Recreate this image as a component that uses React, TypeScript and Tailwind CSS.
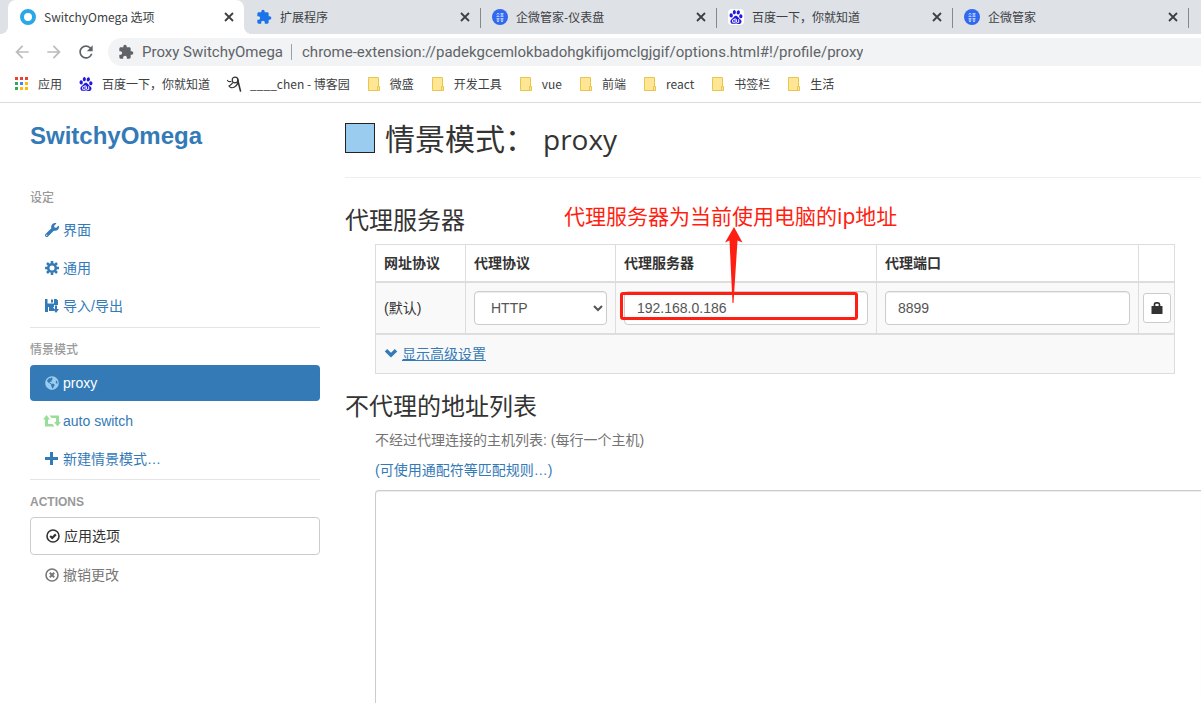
import React from "react";
import { twMerge } from "tailwind-merge";
import { MdArrowBack, MdArrowForward, MdExtension, MdRefresh } from "react-icons/md";
import { SiBaidu } from "react-icons/si";
import { FaGlobeAmericas, FaWrench } from "react-icons/fa";

interface TabProps {
    title: string;
    icon: React.ReactNode;
    active?: boolean;
}

interface BookmarkProps {
    label: string;
    icon?: React.ReactNode;
}

interface SideLinkProps {
    label: string;
    icon: React.ReactNode;
    className?: string;
}

const RingIcon = () => (
    <svg viewBox="0 0 16 16" className="h-4 w-4">
        <circle cx="8" cy="8" r="6" fill="#fff" stroke="#2aa7e8" strokeWidth="4" />
    </svg>
);

const ManagerIcon = () => (
    <svg viewBox="0 0 16 16" className="h-4 w-4">
        <circle cx="8" cy="8" r="8" fill="#3069f0" />
        <g stroke="#c9d9ff" strokeWidth="0.8" fill="none">
            <path d="M4.5 5.5L6 4l1.5 1.5M4.5 7.5h3M6 5.5v2M8.5 4.5h3M8.5 6h3M8.5 7.5h3M10 4v3.5" />
            <path d="M4.5 9.5h3M4.5 11h3M5 12.5h2M6 9v3.5M8.5 9.5h3M8.5 11h3M9 12.5h2M10 9v3.5" />
        </g>
    </svg>
);

const AppsIcon = () => {
    const colors = ["#ea4335", "#ea4335", "#ea4335", "#34a853", "#4285f4", "#fbbc05", "#34a853", "#fbbc05", "#fbbc05"];
    return (
        <svg viewBox="0 0 16 16" className="h-4 w-4">
            {colors.map((color, i) => (
                <rect key={i} x={1 + (i % 3) * 5} y={1 + Math.floor(i / 3) * 5} width="3" height="3" fill={color} />
            ))}
        </svg>
    );
};

const FolderIcon = () => (
    <svg viewBox="0 0 16 16" className="h-4 w-4">
        <path d="M2.5 1.5h10v9h1v4h-11z" fill="#ffe694" stroke="#e8c64e" />
        <path d="M11.5 14v-3.5h1.5" fill="none" stroke="#e8c64e" />
    </svg>
);

const BlogIcon = () => (
    <svg viewBox="0 0 16 16" className="h-4 w-4" fill="none" stroke="#333" strokeLinecap="round">
        <path d="M1.5 4.5c.8 1.3 2 1.3 3.5 1" strokeWidth="1.2" />
        <circle cx="9" cy="4" r="2.8" strokeWidth="1.2" />
        <path d="M12 3c.6 3.5-1 6.5-3.5 8-2 1.2-4.5 1-5.5-1 1.5-.5 2.5-2 3.5-3" strokeWidth="1.2" />
        <path d="M11.8 4.5c1 3.5 1.5 6 2.7 10.5" strokeWidth="1.6" />
    </svg>
);

const CloseIcon = () => (
    <svg viewBox="0 0 14 14" className="h-3.5 w-3.5" stroke="currentColor" strokeWidth="1.8">
        <path d="M3 3l8 8M11 3L3 11" />
    </svg>
);

const CogIcon = () => (
    <svg viewBox="0 0 14 14" className="h-3.5 w-3.5" fill="none" stroke="currentColor">
        <circle cx="7" cy="7" r="3.8" strokeWidth="2.6" />
        <path
            d="M7 0v2.5M7 11.5V14M0 7h2.5M11.5 7H14M2 2l1.8 1.8M10.2 10.2L12 12M12 2l-1.8 1.8M3.8 10.2L2 12"
            strokeWidth="2.6"
        />
    </svg>
);

const SaveIcon = () => (
    <svg viewBox="0 0 14 14" className="h-3.5 w-3.5" fill="currentColor">
        <path d="M0 0h2.5v4.5H9V0h2.5L13 1.5V6H9v2H8l2 3H9v1H4V8H3v5H0z" />
        <path d="M6 .5h2v3H6zM10 6.5h2V10h2l-3 4-3-4h2z" />
    </svg>
);

const RetweetIcon = () => (
    <svg viewBox="0 0 18 12" className="h-3 w-[18px] shrink-0 text-[#99dd99]" fill="currentColor">
        <path d="M0 4.5L3.5 0L7 4.5H5V9h4.5l2 2.5H2v-7zM18 7l-3.5 4.5L11 7h2V3H8.5l-2-2.5H16V7z" />
    </svg>
);

const PlusIcon = () => (
    <svg viewBox="0 0 14 14" className="h-3.5 w-3.5" fill="currentColor">
        <path d="M5 0h3v5h5v3H8v5H5V8H0V5h5z" />
    </svg>
);

const ChevronIcon = () => (
    <svg viewBox="0 0 14 14" className="h-3.5 w-3.5" fill="currentColor">
        <path d="M3.2 2L7 5.7L10.8 2l2.4 2.4L7 10.5L.8 4.4z" />
    </svg>
);

const OkCircleIcon = () => (
    <svg viewBox="0 0 14 14" className="h-3.5 w-3.5" fill="none" stroke="currentColor">
        <circle cx="7" cy="7" r="6" strokeWidth="1.6" />
        <path d="M4.2 7l2 2L9.8 5.4" strokeWidth="2.2" />
    </svg>
);

const RemoveCircleIcon = () => (
    <svg viewBox="0 0 14 14" className="h-3.5 w-3.5" fill="none" stroke="currentColor">
        <circle cx="7" cy="7" r="6" strokeWidth="1.6" />
        <path d="M4.8 4.8l4.4 4.4M9.2 4.8L4.8 9.2" strokeWidth="2" />
    </svg>
);

const LockIcon = () => (
    <svg viewBox="0 0 12 14" className="h-3.5 w-3">
        <path d="M3.5 6V3.5c0-1 .5-1.7 1.5-1.7h2c1 0 1.5.7 1.5 1.7V6" fill="none" stroke="#333" strokeWidth="1.7" />
        <rect x="0.5" y="5" width="11" height="8" rx="0.5" fill="#333" />
    </svg>
);

const Tab: React.FC<TabProps> = ({ title, icon, active }) => (
    <div
        className={twMerge(
            "relative flex h-[34px] w-[236px] min-w-0 items-center pl-3 pr-2",
            active
                ? "rounded-t-lg bg-white before:absolute before:bottom-0 before:-left-2 before:size-2 before:bg-[radial-gradient(circle_at_0_0,#dee1e6_8px,#fff_8px)] after:absolute after:bottom-0 after:-right-2 after:size-2 after:bg-[radial-gradient(circle_at_100%_0,#dee1e6_8px,#fff_8px)]"
                : "after:absolute after:-right-px after:top-2 after:h-5 after:w-px after:bg-[#85888c]"
        )}
    >
        <span className="mr-2 shrink-0">{icon}</span>
        <span className="flex-1 truncate text-xs">{title}</span>
        <button aria-label="关闭" className="shrink-0 text-[#3c4043]">
            <CloseIcon />
        </button>
    </div>
);

const Bookmark: React.FC<BookmarkProps> = ({ label, icon }) => (
    <a href="#" className="flex shrink-0 items-center gap-2">
        {icon ?? <FolderIcon />}
        <span>{label}</span>
    </a>
);

const SideLink: React.FC<SideLinkProps> = ({ label, icon, className }) => (
    <li>
        <a href="#" className={twMerge("flex h-9 items-center gap-1 rounded px-[15px] text-[#337ab7]", className)}>
            <span className="flex w-3.5 shrink-0 justify-center">{icon}</span>
            <span>{label}</span>
        </a>
    </li>
);

const Browser = () => (
    <header className="border-b border-[#dadce0] bg-white font-['Noto_Sans_CJK_SC',sans-serif] text-[#3c4043]">
        <div className="flex bg-[#dee1e6] pl-2">
            <Tab active title="SwitchyOmega 选项" icon={<RingIcon />} />
            <Tab title="扩展程序" icon={<MdExtension className="h-4 w-4 text-[#1a73e8]" />} />
            <Tab title="企微管家-仪表盘" icon={<ManagerIcon />} />
            <Tab
                title="百度一下，你就知道"
                icon={<SiBaidu className="h-4 w-4 rounded-sm bg-white p-px text-[#2319dc]" />}
            />
            <Tab title="企微管家" icon={<ManagerIcon />} />
        </div>
        <div className="flex items-center pl-3 pt-1">
            <button aria-label="后退" className="mr-3 text-[#babcbe]">
                <MdArrowBack className="h-5 w-5" />
            </button>
            <button aria-label="前进" className="mr-3 text-[#babcbe]">
                <MdArrowForward className="h-5 w-5" />
            </button>
            <button aria-label="重新加载" className="mr-3 text-[#5f6368]">
                <MdRefresh className="h-5 w-5" />
            </button>
            <div className="flex h-7 min-w-0 flex-1 items-center rounded-l-full bg-[#f1f3f4] pl-2.5 text-[15px] text-[#5f6368] font-['Roboto','Noto_Sans_CJK_SC',sans-serif]">
                <MdExtension className="mr-2 h-4 w-4 shrink-0" />
                <span className="whitespace-nowrap">Proxy SwitchyOmega</span>
                <span className="mr-2.5 ml-2 h-4 w-px bg-[#9aa0a6]" />
                <span className="truncate">chrome-extension://padekgcemlokbadohgkifijomclgjgif/options.html#!/profile/proxy</span>
            </div>
        </div>
        <nav className="flex h-9 items-center gap-4 overflow-hidden pl-3.5 text-xs">
            <Bookmark label="应用" icon={<AppsIcon />} />
            <Bookmark label="百度一下，你就知道" icon={<SiBaidu className="h-4 w-4 p-px text-[#2319dc]" />} />
            <Bookmark label="____chen - 博客园" icon={<BlogIcon />} />
            <Bookmark label="微盛" />
            <Bookmark label="开发工具" />
            <Bookmark label="vue" />
            <Bookmark label="前端" />
            <Bookmark label="react" />
            <Bookmark label="书签栏" />
            <Bookmark label="生活" />
        </nav>
    </header>
);

const Sidebar = () => (
    <aside className="w-[320px] shrink-0 pl-[30px]">
        <h1 className="pt-5 text-2xl leading-[26px] font-bold text-[#337ab7]">
            <a href="#">SwitchyOmega</a>
        </h1>
        <h2 className="mt-[39px] mb-1 text-xs leading-5 font-medium text-[#999]">设定</h2>
        <ul className="space-y-0.5 border-b border-[#e5e5e5] pb-[3px]">
            <SideLink label="界面" icon={<FaWrench className="h-3.5 w-3.5" />} />
            <SideLink label="通用" icon={<CogIcon />} />
            <SideLink label="导入/导出" icon={<SaveIcon />} />
        </ul>
        <h2 className="mt-3 mb-[5px] text-xs leading-5 font-medium text-[#999]">情景模式</h2>
        <ul className="space-y-0.5 border-b border-[#e5e5e5] pb-0.5">
            <SideLink
                label="proxy"
                className="bg-[#337ab7] text-white"
                icon={<FaGlobeAmericas className="h-3.5 w-3.5 text-[#99ccee]" />}
            />
            <SideLink label="auto switch" icon={<RetweetIcon />} />
            <SideLink label="新建情景模式…" icon={<PlusIcon />} />
        </ul>
        <h2 className="mt-3 mb-[5px] text-xs leading-5 font-bold text-[#999]">ACTIONS</h2>
        <ul className="space-y-0.5">
            <SideLink label="应用选项" className="h-[38px] border border-[#ccc] text-[#333]" icon={<OkCircleIcon />} />
            <SideLink label="撤销更改" className="text-[#777]" icon={<RemoveCircleIcon />} />
        </ul>
    </aside>
);

const field = "h-[34px] w-full rounded border border-[#ccc] bg-white px-3 text-sm text-[#555] shadow-[inset_0_1px_1px_rgba(0,0,0,0.075)]";

const ServerTable = () => (
    <div className="relative ml-[30px] w-[800px] max-w-full">
        <table className="w-full table-fixed border-collapse border border-[#ddd] text-left">
            <colgroup>
                <col className="w-[90px]" />
                <col className="w-[150px]" />
                <col className="w-[261px]" />
                <col className="w-[262px]" />
                <col />
            </colgroup>
            <thead>
                <tr className="h-[37px] border-b-2 border-[#ddd]">
                    <th className="border-r border-[#ddd] px-2">网址协议</th>
                    <th className="border-r border-[#ddd] px-2">代理协议</th>
                    <th className="border-r border-[#ddd] px-2">代理服务器</th>
                    <th className="border-r border-[#ddd] px-2">代理端口</th>
                    <th></th>
                </tr>
            </thead>
            <tbody className="bg-[#f9f9f9]">
                <tr className="h-[52px] border-b-2 border-[#ddd]">
                    <td className="border-r border-[#ddd] px-2">(默认)</td>
                    <td className="border-r border-[#ddd] px-2">
                        <select aria-label="代理协议" className={field} defaultValue="HTTP">
                            <option>HTTP</option>
                            <option>HTTPS</option>
                            <option>SOCKS5</option>
                        </select>
                    </td>
                    <td className="border-r border-[#ddd] px-2">
                        <input aria-label="代理服务器" type="text" className={field} defaultValue="192.168.0.186" />
                    </td>
                    <td className="border-r border-[#ddd] px-2">
                        <input aria-label="代理端口" type="text" className={field} defaultValue="8899" />
                    </td>
                    <td className="px-1">
                        <button
                            aria-label="代理登录"
                            className="flex h-[30px] w-7 items-center justify-center rounded-[3px] border border-[#ccc] bg-white"
                        >
                            <LockIcon />
                        </button>
                    </td>
                </tr>
                <tr className="h-10">
                    <td colSpan={5} className="px-2">
                        <a href="#" className="flex items-center gap-1 text-[#337ab7]">
                            <ChevronIcon />
                            <span className="underline">显示高级设置</span>
                        </a>
                    </td>
                </tr>
            </tbody>
        </table>

        {/* annotation over the server field */}
        <p className="absolute -top-[42px] left-[189px] text-[21px] leading-7 whitespace-nowrap text-[#ff1f12] font-['Noto_Sans','Noto_Sans_CJK_SC',sans-serif]">
            代理服务器为当前使用电脑的ip地址
        </p>
        <div className="pointer-events-none absolute top-12 left-[245px] h-7 w-[238px] rounded-[3px] border-3 border-[#ff1f12]" />
        <svg viewBox="0 0 18 77" className="pointer-events-none absolute -top-[17px] left-[350px] h-[77px] w-[18px]" fill="#ff1f12">
            <path d="M9 0L17.5 15.5L12.5 13.5L8.5 76L7.5 76L4.5 13.5L0 15.5Z" />
        </svg>
    </div>
);

const Profile = () => (
    <main className="flex min-w-0 flex-1 flex-col pl-[25px]">
        <div className="flex items-center gap-2.5 border-b border-[#eee] pt-5 pb-6">
            <input
                type="color"
                aria-label="颜色"
                defaultValue="#99ccee"
                className="h-[30px] w-[30px] appearance-none border border-[#222] bg-[#99ccee] p-0 [&::-webkit-color-swatch-wrapper]:p-0 [&::-webkit-color-swatch]:border-0"
            />
            <h2 className="flex h-[30px] items-center gap-2 pt-0.5 text-[30px] font-['Open_Sans','Noto_Sans_CJK_SC',sans-serif]">
                <span>情景模式：</span>
                <span className="text-[28px]">proxy</span>
            </h2>
        </div>
        <h3 className="mt-[30px] mb-2.5 text-2xl leading-[26px]">代理服务器</h3>
        <ServerTable />
        <h3 className="mt-5 mb-2.5 text-2xl leading-[26px]">不代理的地址列表</h3>
        <div className="flex flex-1 flex-col pl-[30px]">
            <label htmlFor="bypass" className="mb-2.5 text-[#737373]">
                不经过代理连接的主机列表: (每行一个主机)
            </label>
            <a href="#" className="mb-2.5 text-[#337ab7]">
                (可使用通配符等匹配规则…)
            </a>
            <textarea
                id="bypass"
                className="min-h-48 w-full flex-1 resize-none rounded-tl border-t border-l border-[#ccc] p-3 shadow-[inset_0_1px_1px_rgba(0,0,0,0.075)]"
            />
        </div>
    </main>
);

const App = () => (
    <div className="flex min-h-screen flex-col bg-white text-sm leading-5 text-[#333] font-['Liberation_Sans','Noto_Sans_CJK_SC',sans-serif]">
        <Browser />
        <div className="flex flex-1">
            <Sidebar />
            <Profile />
        </div>
    </div>
);

export default App;
